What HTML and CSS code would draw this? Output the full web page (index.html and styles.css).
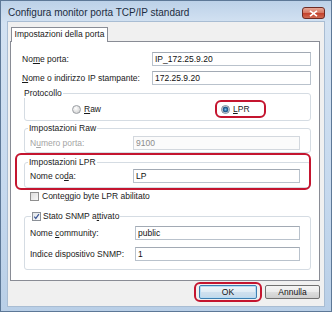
FILE: index.html
```html
<!DOCTYPE html>
<html lang="it">
<head>
  <meta charset="UTF-8">
  <title>Configura monitor porta TCP/IP standard</title>
  <link rel="stylesheet" href="styles.css">
</head>
<body>
<div class="window">
  <div class="titlebar">
    <span class="title">Configura monitor porta TCP/IP standard</span>
    <button class="close">
      <svg width="9" height="7" viewBox="0 0 9 7"><path d="M1 0.8 L8 6.2 M8 0.8 L1 6.2" stroke="#fff" stroke-width="1.6" fill="none"/></svg>
    </button>
  </div>

  <div class="client">
    <div class="tabs">
      <div class="tab">Impostazioni della porta</div>
    </div>

    <div class="panel">
      <div class="row">
        <label class="label-main">No<u>m</u>e porta:</label>
        <input class="field" type="text" value="IP_172.25.9.20">
      </div>
      <div class="row row-next">
        <label class="label-main"><u>N</u>ome o indirizzo IP stampante:</label>
        <input class="field" type="text" value="172.25.9.20">
      </div>

      <!-- Protocollo -->
      <fieldset class="group group-proto">
        <legend>Protocollo</legend>
        <div class="radios">
          <span class="radio-item raw"><span class="radio"></span><span><u>R</u>aw</span></span>
          <span class="radio-item lpr ring ring-lpr"><span class="radio checked"></span><span><u>L</u>PR</span></span>
        </div>
      </fieldset>

      <fieldset class="group group-raw">
        <legend>Impostazioni Raw</legend>
        <div class="row disabled">
          <label class="label-group">N<u>u</u>mero porta:</label>
          <input class="field" type="text" value="9100" disabled>
        </div>
      </fieldset>

      <fieldset class="group group-lpr ring ring-group">
        <legend>Impostazioni LPR</legend>
        <div class="row">
          <label class="label-group">Nome co<u>d</u>a:</label>
          <input class="field" type="text" value="LP">
        </div>
      </fieldset>

      <div class="check-row">
        <span class="check"></span><span>Conte<u>g</u>gio byte LPR abilitato</span>
      </div>

      <fieldset class="group group-snmp">
        <legend class="legend-check"><span class="check checked"><svg width="9" height="9" viewBox="0 0 9 9"><path d="M1.6 4.6 L3.6 7 L7.6 1.4" stroke="#3d5796" stroke-width="1.5" fill="none"/></svg></span><span>Stato SNMP a<u>t</u>tivato</span></legend>
        <div class="row">
          <label class="label-snmp">Nome <u>c</u>ommunity:</label>
          <input class="field" type="text" value="public">
        </div>
        <div class="row row-snmp">
          <label class="label-snmp">Indice dispositivo SNMP:</label>
          <input class="field" type="text" value="1">
        </div>
      </fieldset>
    </div>

    <div class="footer">
      <button class="btn btn-default ring ring-ok">OK</button>
      <button class="btn">Annulla</button>
    </div>
  </div>
</div>
</body>
</html>
```

FILE: styles.css
```css
body {
  margin: 0;
  background-color: #6f8cab;
  font-family: "Liberation Sans", Arial, sans-serif;
  font-size: 8.5px;
  color: #1a1a1a;
}
u {
  text-decoration-thickness: 1px;
  text-underline-offset: 1px;
}
.window {
  width: 332px;
  height: 312px;
  box-sizing: border-box;
  border: 1px solid #5d7897;
  padding: 0 6px 4px;
  background: linear-gradient(180deg, #bcd1e8 0%, #d3e2f2 22px, #c6d9ee 60%, #b9cfe7 100%);
  display: flex;
  flex-direction: column;
}
/* Title bar */
.titlebar {
  height: 20px;
  box-sizing: border-box;
  padding-top: 4px;
  display: flex;
  align-items: center;
  justify-content: space-between;
}
.title {
  padding-left: 1px;
  font-size: 10px;
  line-height: 12px;
  color: #1c2c40;
}
.close {
  width: 23px;
  height: 12px;
  padding: 0;
  border: 1px solid #6e2b24;
  border-radius: 3px;
  background: linear-gradient(180deg, #e7a796 0%, #d77a66 45%, #c4432e 55%, #cf6a52 100%);
  display: flex;
  align-items: center;
  justify-content: center;
}
/* Client area */
.client {
  flex: 1;
  background-color: #f0f0f0;
  border: 1px solid #a9bdd3;
  padding: 5px 4px 0 2px;
  display: flex;
  flex-direction: column;
}
.tabs {
  display: flex;
  padding-left: 1px;
}
.tab {
  position: relative;
  z-index: 1;
  width: 97px;
  height: 15px;
  box-sizing: border-box;
  margin-bottom: -1px;
  border: 1px solid #898c95;
  border-bottom: none;
  background-color: #fff;
  text-align: center;
  line-height: 13px;
}
.panel {
  background-color: #fff;
  border: 1px solid #898c95;
  padding: 10px 8px 10px 11px;
}
/* Rows */
.row {
  display: flex;
  align-items: center;
  height: 14px;
}
.row-next {
  margin-top: 5px;
}
.label-main {
  width: 130px;
  flex-shrink: 0;
}
.label-group {
  width: 103px;
  flex-shrink: 0;
}
.label-snmp {
  width: 105px;
  flex-shrink: 0;
}
.field {
  flex: 1;
  min-width: 0;
  height: 14px;
  box-sizing: border-box;
  margin: 0;
  padding: 0 0 0 2px;
  border: 1px solid #b9c2cc;
  border-top-color: #a2aab4;
  font-family: inherit;
  font-size: 8.5px;
  color: #111;
  background-color: #fff;
}
.disabled label {
  color: #a4a4a4;
}
.disabled .field {
  color: #8c8c8c;
  border-color: #d3d8de;
  background-color: #fbfbfb;
}
/* Group boxes */
.group {
  margin: 0 0 0 2px;
  padding: 0 10px 0 5px;
  border: 1px solid #d5dce3;
  border-radius: 3px;
  min-width: 0;
}
.group legend {
  padding: 0 1px;
  margin-left: -2px;
  line-height: 10px;
}
.group-proto {
  margin-top: 3px;
  padding: 0;
}
.radios {
  display: flex;
  align-items: center;
  height: 22px;
}
.radio-item {
  display: flex;
  align-items: center;
  gap: 3px;
}
.raw {
  margin-left: 47px;
}
.lpr {
  margin-left: auto;
  margin-right: 44px;
  width: 51px;
  height: 18px;
  box-sizing: border-box;
  padding-left: 6px;
}
.radio {
  width: 9px;
  height: 9px;
  box-sizing: border-box;
  border-radius: 50%;
  border: 1px solid #9a9ea3;
  background: radial-gradient(circle at 40% 35%, #ffffff 0, #e6e6e6 45%, #c9c9c9 100%);
}
.radio.checked {
  border-color: #7f8c99;
  background: radial-gradient(circle at 50% 50%, #7fc0ea 0, #2d6ea3 1.6px, #1d4e7c 2.6px, #d9e3ec 3.2px, #c7d3de 100%);
}
.group-raw {
  margin-top: 2px;
  padding-top: 3px;
  padding-bottom: 2px;
}
.group-lpr {
  margin-top: 4px;
  padding-top: 2px;
  padding-bottom: 4px;
}
.check-row {
  display: flex;
  align-items: center;
  gap: 3px;
  height: 10px;
  margin: 3px 0 0 8px;
}
.check {
  width: 9px;
  height: 9px;
  box-sizing: border-box;
  border: 1px solid #8f8f8f;
  background: linear-gradient(135deg, #dcdcdc, #f8f8f8);
  display: inline-flex;
  align-items: center;
  justify-content: center;
}
.check.checked {
  border-color: #8b9097;
  background: linear-gradient(135deg, #e2e6ea, #fafafa);
}
.check svg {
  display: block;
}
.group-snmp {
  margin-top: 10px;
  padding-top: 5px;
  padding-bottom: 8px;
}
.group .legend-check {
  display: flex;
  align-items: center;
  gap: 2px;
  margin-left: 1px;
}
.row-snmp {
  margin-top: 7px;
}
/* Buttons */
.footer {
  display: flex;
  justify-content: flex-end;
  gap: 8px;
  padding-top: 4px;
}
.btn {
  height: 14px;
  width: 55px;
  padding: 0;
  border: 1px solid #707070;
  border-radius: 2px;
  background: linear-gradient(180deg, #f4f4f4 0%, #ebebeb 48%, #dddddd 52%, #cfcfcf 100%);
  font-family: inherit;
  font-size: 8.5px;
  color: #111;
  line-height: 12px;
}
.btn-default {
  width: 58px;
  border-color: #3c7fb1;
  background: linear-gradient(180deg, #eef5fa 0%, #e0ecf5 48%, #cfe1ef 52%, #c4d9ea 100%);
  box-shadow: inset 0 0 0 1px #b8dcf4;
}
/* Red highlight rings */
.ring {
  position: relative;
}
.ring::after {
  content: '';
  position: absolute;
  border: 2px solid #c4152f;
  border-radius: 6px;
  pointer-events: none;
}
.ring-lpr::after {
  inset: 0;
}
.ring-group::after {
  inset: -14px -1px -3px -10px;
}
.ring-ok::after {
  inset: -4px -6px;
}
```
